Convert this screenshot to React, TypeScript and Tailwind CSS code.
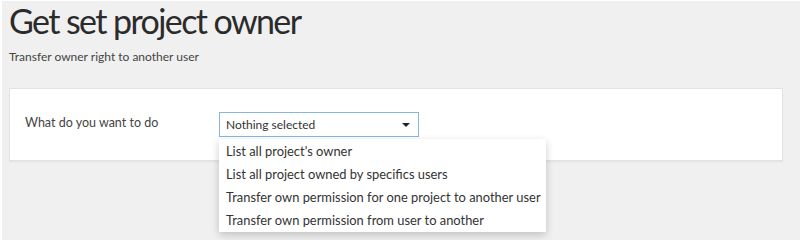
import React from "react";

const options = [
  "List all project's owner",
  "List all project owned by specifics users",
  "Transfer own permission for one project to another user",
  "Transfer own permission from user to another",
];

export default function App() {
  return (
    <div
      className="h-[240px] w-[800px] overflow-hidden border-l-2 border-t border-white bg-[#f0f0f0] text-[#333]"
      style={{ fontFamily: "Lato, 'Open Sans', sans-serif" }}
    >
      <div className="px-[7px]">
        <h1 className="text-[34px] font-normal leading-[40px] tracking-[-1.6px] text-[#2b2b2b]">
          Get set project owner
        </h1>
        <p className="mt-[8px] text-[12px] leading-[16px] text-[#444]">
          Transfer owner right to another user
        </p>
        <div className="mt-[23px] mr-[10px] flex h-[73px] border border-[#e2e2e2] bg-white px-[15px] pt-[23px] shadow-[0_2px_0_#e9e9e9]">
          <div className="mt-[2px] w-[194px] text-[12.5px] leading-[18px] text-[#444]">
            What do you want to do
          </div>
          <div className="relative">
            <div className="flex h-[25px] w-[200px] items-center justify-between border border-[#86b5e0] pl-[6px] pr-[8px] text-[12px] text-[#333]">
              <span>Nothing selected</span>
              <svg width="8" height="4" viewBox="0 0 8 4">
                <path d="M0 0h8L4 4z" fill="#222" />
              </svg>
            </div>
            <div className="absolute left-0 top-[27px] z-10 w-[327px] bg-white pt-[1px] shadow-[0_3px_8px_rgba(0,0,0,0.2)]">
              {options.map((o) => (
                <div key={o} className="h-[23px] whitespace-nowrap px-[7px] text-[12.9px] leading-[23px] text-[#333]">
                  {o}
                </div>
              ))}
            </div>
          </div>
        </div>
      </div>
    </div>
  );
}
